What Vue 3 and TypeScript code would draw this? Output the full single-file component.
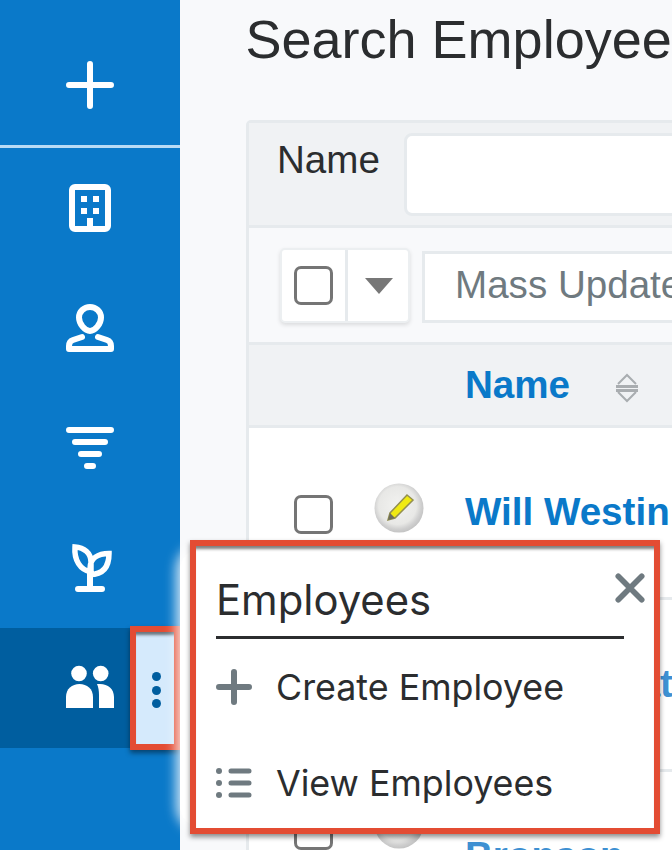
<script setup lang="ts">
const railIcons = ['building', 'person', 'filter', 'plant'] as const
</script>

<template>
  <div class="page">
    <nav class="rail">
      <div class="rail-top">
        <svg class="icon" viewBox="0 0 48 48"><path d="M24 3v42M3 24h42" class="w" stroke-width="6" /></svg>
      </div>
      <div v-for="name in railIcons" :key="name" class="rail-item">
        <svg v-if="name === 'building'" class="icon" viewBox="0 0 48 48">
          <rect x="6" y="3" width="36" height="42" rx="3" fill="none" stroke="#fff" stroke-width="6" />
          <path fill="#fff" d="M15 12h6v6h-6zM27 12h6v6h-6zM15 24h6v6h-6zM27 24h6v6h-6zM21 34h6v10h-6z" />
        </svg>
        <svg v-else-if="name === 'person'" class="icon" viewBox="0 0 48 48">
          <path class="w" stroke-width="6" d="M24 3c-6 0-11 4.500-11 10.500C13 20 19 27 24 27s11-7 11-13.500C35 7.500 30 3 24 3z" />
          <path class="w" stroke-width="6" d="M16 33l-9 3c-3 1-4 3-4 6v3h42v-3c0-3-1-5-4-6l-9-3" />
        </svg>
        <svg v-else-if="name === 'filter'" class="icon" viewBox="0 0 48 48">
          <path class="w" stroke-width="6" d="M3 6h42M9 18h30M15 30h18M21 42h6" />
        </svg>
        <svg v-else class="icon" viewBox="0 0 48 48">
          <path class="w" stroke-width="6" d="M24 28v17M12 45h24" />
          <path fill="none" stroke="#fff" stroke-width="5.500" stroke-linejoin="miter" d="M9 3c9 .5 16 6 16 15v10C14 26 8 16 9 3zM43 9.500c-11 0-19 5-19 15v6c12 0 19-6 19-21z" />
        </svg>
      </div>
      <div class="rail-active">
        <div class="active-main">
          <svg class="icon" viewBox="0 0 48 48">
            <circle cx="13" cy="9.500" r="7.800" fill="#fff" />
            <circle cx="34.700" cy="9.500" r="7.800" fill="#fff" />
            <path fill="#fff" d="M0 44V33c0-8 6-13 13.500-13S27 25 27 33v11z" />
            <path fill="#fff" d="M31 20h3c8 0 14 5 14 13v11H33V31c0-4-.5-8-2-11z" />
          </svg>
        </div>
        <div class="kebab">
          <i></i><i></i><i></i>
        </div>
      </div>
    </nav>

    <main class="content">
      <h1 class="title">Search Employees</h1>
      <section class="panel">
        <div class="filter-row">
          <span class="filter-label">Name</span>
          <div class="filter-input"></div>
        </div>
        <div class="toolbar">
          <div class="select-group">
            <div class="select-check"><span class="checkbox"></span></div>
            <div class="select-caret"><span class="caret"></span></div>
          </div>
          <div class="mass-update">Mass Update</div>
        </div>
        <div class="head-row">
          <a class="head-name">Name</a>
          <svg class="sort" viewBox="0 0 24 30">
            <path fill="none" stroke="#a9adb0" stroke-width="2" d="M3 11 12 2l9 9M3 19l9 9 9-9" />
            <path stroke="#a9adb0" stroke-width="3" d="M1 13.500h22" />
            <path stroke="#a9adb0" stroke-width="3" d="M1 17.500h22" />
          </svg>
        </div>
        <div class="row">
          <span class="checkbox row-check"></span>
          <svg class="pencil" viewBox="0 0 50 50">
            <defs>
              <radialGradient id="disc" cx="0.47" cy="0.45" r="0.55">
                <stop offset="0" stop-color="#f2f2f0" />
                <stop offset="0.7" stop-color="#e8e8e6" />
                <stop offset="0.88" stop-color="#cfcfcf" />
                <stop offset="1" stop-color="#c4c4c4" />
              </radialGradient>
            </defs>
            <circle cx="25" cy="25" r="24.500" fill="url(#disc)" />
            <path d="M33 12l6 5-18 18-7 2 2-7z" fill="#f0ea12" stroke="#938f50" stroke-width="1.500" />
            <path d="M14 37l2-7 5 5z" fill="#6d6d5c" />
          </svg>
          <a class="row-name">Will Westin</a>
        </div>
        <div class="row">
          <span class="checkbox row-check"></span>
          <svg class="pencil" viewBox="0 0 50 50"><circle cx="25" cy="25" r="24.500" fill="url(#disc)" /></svg>
          <a class="row-name faded">Sam Wheatley</a>
        </div>
        <div class="row raised">
          <span class="checkbox row-check"></span>
          <svg class="pencil" viewBox="0 0 50 50"><circle cx="25" cy="25" r="24.500" fill="url(#disc)" /></svg>
          <a class="row-name faded">Bronson</a>
        </div>
      </section>
    </main>

    <div class="menu-glow"></div>
    <div class="menu">
      <div class="menu-head">
        <span class="menu-title">Employees</span>
      </div>
      <svg class="close" viewBox="0 0 32 32"><path d="M3.500 3.500l25 25M28.500 3.500l-25 25" fill="none" stroke="#6f7a80" stroke-width="6" stroke-linecap="round" /></svg>
      <div class="menu-item">
        <svg class="menu-icon" viewBox="0 0 36 36"><path d="M18 3v30M3 18h30" fill="none" stroke="#6f7a80" stroke-width="6" stroke-linecap="round" /></svg>
        <span>Create Employee</span>
      </div>
      <div class="menu-item">
        <svg class="menu-icon" viewBox="0 0 36 36">
          <circle cx="3" cy="6" r="3" fill="#6f7a80" /><circle cx="3" cy="18" r="3" fill="#6f7a80" /><circle cx="3" cy="30" r="3" fill="#6f7a80" />
          <path d="M15 6h18M15 18h18M15 30h18" fill="none" stroke="#6f7a80" stroke-width="5" stroke-linecap="round" />
        </svg>
        <span>View Employees</span>
      </div>
    </div>
  </div>
</template>

<style>
html, body { margin: 0; padding: 0; overflow: hidden; }
</style>

<style scoped>
.page {
  position: relative;
  display: flex;
  width: 672px;
  height: 850px;
  overflow: hidden;
  background: #f8f9fb;
  font-family: "Liberation Sans", Arial, sans-serif;
}
.rail {
  flex: 0 0 180px;
  display: flex;
  flex-direction: column;
  background: #0a79c9;
}
.rail-top {
  height: 120px;
  padding-top: 25px;
  flex: none;
  border-bottom: 3px solid #b9dbf5;
  display: flex;
  align-items: center;
  justify-content: center;
}
.rail-item {
  height: 120px;
  flex: none;
  display: flex;
  align-items: center;
  justify-content: center;
}
.icon { width: 48px; height: 48px; display: block; }
.w { fill: none; stroke: #fff; stroke-linecap: round; stroke-linejoin: round; }
.rail-active {
  height: 120px;
  flex: none;
  display: flex;
  background: #005e9f;
}
.active-main {
  width: 130px;
  padding-left: 66px;
  box-sizing: border-box;
  display: flex;
  align-items: center;
}
.kebab {
  position: relative;
  width: 50px;
  height: 124px;
  margin-top: -2px;
  box-sizing: border-box;
  border: 6px solid #e34c33;
  background: #d5eafc;
  box-shadow: 0 3px 5px rgba(0, 0, 0, 0.45), inset 0 5px 3px -2px rgba(0, 0, 0, 0.5);
  display: flex;
  flex-direction: column;
  align-items: center;
  justify-content: center;
  gap: 4.500px;
  padding-left: 2px;
  padding-top: 4px;
}
.kebab i {
  display: block;
  width: 9px;
  height: 9px;
  border-radius: 50%;
  background: #005e9f;
}
.content {
  flex: 1;
  min-width: 0;
  padding-left: 66px;
}
.title {
  margin: 0 0 0 -0.5px;
  height: 120px;
  padding-top: 10px;
  box-sizing: border-box;
  font-size: 54px;
  font-weight: 400;
  line-height: 58px;
  color: #2b2d2f;
  white-space: nowrap;
}
.panel {
  width: 600px;
  border: 3px solid #e6eaed;
  border-radius: 5px 0 0 0;
  background: #fff;
  box-sizing: border-box;
}
.filter-row {
  height: 105px;
  box-sizing: border-box;
  background: #f0f2f4;
  border-bottom: 3px solid #e6eaed;
  display: flex;
  align-items: flex-start;
  padding: 10px 0 0 28px;
  gap: 24px;
}
.filter-label {
  font-size: 38.600px;
  line-height: 54px;
  color: #2b2d2f;
}
.filter-input {
  width: 400px;
  height: 83px;
  box-sizing: border-box;
  border: 3px solid #e6eaed;
  border-radius: 8px;
  background: #fff;
}
.toolbar {
  height: 117px;
  box-sizing: border-box;
  background: #f8f9fb;
  border-bottom: 3px solid #e6eaed;
  display: flex;
  align-items: flex-start;
  padding: 20px 0 0 31px;
  gap: 12px;
}
.select-group {
  width: 130px;
  height: 75px;
  box-sizing: border-box;
  border: 2px solid #eceff1;
  border-radius: 5px;
  background: #fff;
  box-shadow: 0 2px 4px rgba(0, 0, 0, 0.12);
  display: flex;
}
.select-check {
  width: 66px;
  box-sizing: border-box;
  border-right: 3px solid #e6eaed;
  display: flex;
  align-items: center;
  justify-content: center;
}
.select-caret {
  flex: 1;
  display: flex;
  align-items: center;
  justify-content: center;
  padding-left: 2px;
}
.caret {
  width: 0;
  height: 0;
  border-left: 14px solid transparent;
  border-right: 14px solid transparent;
  border-top: 16px solid #777;
}
.checkbox {
  display: block;
  width: 39px;
  height: 39px;
  flex: none;
  box-sizing: border-box;
  border: 3px solid #757575;
  border-radius: 7px;
  background: #fff;
}
.mass-update {
  width: 400px;
  height: 72px;
  box-sizing: border-box;
  margin-top: 3px;
  border: 3px solid #e6eaed;
  background: #fff;
  padding-left: 30px;
  font-size: 38.600px;
  line-height: 62px;
  color: #6f7a80;
  white-space: nowrap;
}
.head-row {
  height: 83px;
  box-sizing: border-box;
  background: #f0f2f4;
  border-bottom: 3px solid #e6eaed;
  display: flex;
  align-items: center;
  padding-left: 216px;
  gap: 45px;
}
.head-name {
  font-size: 38.600px;
  font-weight: 700;
  color: #0a79c9;
}
.sort { width: 24px; height: 30px; display: block; margin-top: 6px; }
.row {
  height: 172px;
  box-sizing: border-box;
  background: #fff;
  display: flex;
  align-items: flex-start;
  padding: 55px 0 0 45px;
  border-bottom: 3px solid #e6eaed;
}
.row-check { margin-top: 12px; }
.pencil { width: 50px; height: 50px; display: block; margin-left: 41px; flex: none; }
.row-name {
  margin-left: 41px;
  margin-top: 4px;
  font-size: 38.600px;
  line-height: 50px;
  font-weight: 700;
  color: #0a79c9;
  white-space: nowrap;
}
.row-name.faded { color: #3e90d2; }
.row.raised { padding-top: 27px; }
.row.raised .row-name { margin-top: 32px; }
.menu-glow {
  position: absolute;
  left: 180px;
  top: 548px;
  width: 30px;
  height: 280px;
  border-radius: 22px 0 0 22px;
  background: #fff;
  box-shadow: 0 0 12px 4px rgba(255, 255, 255, 0.8);
}
.menu {
  position: absolute;
  left: 190px;
  top: 540px;
  width: 470px;
  height: 294px;
  box-sizing: border-box;
  border: 6px solid #e34c33;
  background: #fff;
  box-shadow: 0 3px 5px rgba(0, 0, 0, 0.45), inset 0 5px 3px -2px rgba(0, 0, 0, 0.5);
  padding: 22px 30px 0 20px;
  font-family: Inter, "Noto Sans", sans-serif;
  color: #2b2d2f;
}
.menu-head {
  height: 65px;
  padding-top: 3px;
  border-bottom: 3px solid #2b2d2f;
}
.menu-title {
  font-size: 41.800px;
  line-height: 58px;
}
.close {
  position: absolute;
  right: 9px;
  top: 27px;
  width: 30px;
  height: 30px;
}
.menu-item {
  height: 96px;
  display: flex;
  align-items: center;
  gap: 24px;
  font-size: 35.800px;
  white-space: nowrap;
}
.menu-icon { width: 36px; height: 36px; display: block; flex: none; }
</style>
